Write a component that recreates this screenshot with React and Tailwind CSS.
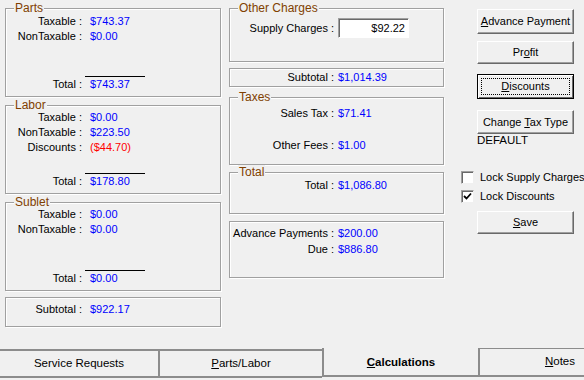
import React from 'react'

const font = { fontFamily: '"Liberation Sans", Arial, sans-serif' }

const Group = ({ title, className = '', children }) => (
  <div className={`relative border border-[#a0a0a0] shadow-[inset_1px_1px_0_#fff,1px_1px_0_#fff] ${className}`}>
    {title && (
      <span className="absolute -top-[8px] left-[8px] px-[1px] bg-[#f0f0f0] text-[#804000] leading-[14px] text-[12px] whitespace-nowrap">
        {title}
      </span>
    )}
    {children}
  </div>
)

const Row = ({ label, value, color = 'text-[#0000ff]', w = 'w-[76px]', gap = 'pl-[8px]' }) => (
  <div className="flex h-[15px] leading-[15px] whitespace-nowrap">
    <div className={`${w} text-right shrink-0`}>{label}</div>
    <div className={`${gap} ${color}`}>{value}</div>
  </div>
)

const TotalRow = ({ value }) => (
  <div className="mt-auto pb-[4px]">
    <div className="ml-[79px] w-[60px] border-t border-black" />
    <Row label="Total :" value={value} />
  </div>
)

const MidRow = ({ label, value }) => (
  <Row label={label} value={value} w="w-[104px]" gap="pl-[4px]" />
)

const Btn = ({ children, h = 'h-[25px]', focused = false, className = '' }) => (
  <button
    className={`relative w-[97px] shrink-0 ${h} bg-[#f0f0f0] text-black text-[11px] leading-none whitespace-nowrap ${
      focused
        ? 'border border-black shadow-[inset_1px_1px_0_#fff,inset_-1px_-1px_0_#696969]'
        : 'border border-t-white border-l-white border-r-[#696969] border-b-[#696969] shadow-[inset_-1px_-1px_0_#a0a0a0]'
    } ${className}`}
  >
    {focused && <span className="absolute inset-[3px] border border-dotted border-black" />}
    <span className="relative">{children}</span>
  </button>
)

const Check = ({ checked, label }) => (
  <div className="flex items-center h-[13px] whitespace-nowrap">
    <div className="w-[13px] h-[13px] shrink-0 bg-white border border-t-[#a0a0a0] border-l-[#a0a0a0] border-r-[#f0f0f0] border-b-[#f0f0f0] shadow-[inset_1px_1px_0_#696969] flex items-center justify-center">
      {checked && (
        <svg width="9" height="9" viewBox="0 0 9 9">
          <path d="M1 4 L3.5 6.5 L8 1.5" stroke="#000" strokeWidth="1.8" fill="none" />
        </svg>
      )}
    </div>
    <span className="ml-[6px] text-[11px] leading-[13px]">{label}</span>
  </div>
)

const App = () => {
  return (
    <div className="w-[584px] h-[380px] bg-[#f0f0f0] text-black text-[11px] flex flex-col overflow-hidden select-none" style={font}>
      <div className="flex flex-1 pt-[8px]">
        {/* left column */}
        <div className="ml-[5px] w-[216px] shrink-0 flex flex-col">
          <Group title="Parts" className="h-[89px] flex flex-col pt-[5px]">
            <Row label="Taxable :" value="$743.37" />
            <Row label="NonTaxable :" value="$0.00" />
            <TotalRow value="$743.37" />
          </Group>
          <Group title="Labor" className="mt-[8px] h-[89px] flex flex-col pt-[4px]">
            <Row label="Taxable :" value="$0.00" />
            <Row label="NonTaxable :" value="$223.50" />
            <Row label="Discounts :" value="($44.70)" color="text-[#ff0000]" />
            <TotalRow value="$178.80" />
          </Group>
          <Group title="Sublet" className="mt-[8px] h-[89px] flex flex-col pt-[4px]">
            <Row label="Taxable :" value="$0.00" />
            <Row label="NonTaxable :" value="$0.00" />
            <TotalRow value="$0.00" />
          </Group>
          <Group className="mt-[6px] h-[30px] pt-[4px]">
            <Row label="Subtotal :" value="$922.17" />
          </Group>
        </div>

        {/* middle column */}
        <div className="ml-[8px] w-[215px] shrink-0 flex flex-col">
          <Group title="Other Charges" className="h-[54px] pt-[9px]">
            <div className="flex items-center h-[20px] whitespace-nowrap">
              <div className="w-[104px] text-right">Supply Charges :</div>
              <div className="ml-[4px] w-[71px] h-[20px] bg-white border border-t-[#a0a0a0] border-l-[#a0a0a0] border-r-[#fff] border-b-[#fff] shadow-[inset_1px_1px_0_#696969] text-right pr-[3px] leading-[18px]">
                $92.22
              </div>
            </div>
          </Group>
          <Group className="mt-[6px] h-[19px] flex items-center">
            <MidRow label="Subtotal :" value="$1,014.39" />
          </Group>
          <Group title="Taxes" className="mt-[10px] h-[68px] pt-[8px]">
            <MidRow label="Sales Tax :" value="$71.41" />
            <div className="mt-[17px]">
              <MidRow label="Other Fees :" value="$1.00" />
            </div>
          </Group>
          <Group title="Total" className="mt-[7px] h-[42px] pt-[5px]">
            <MidRow label="Total :" value="$1,086.80" />
          </Group>
          <Group className="mt-[7px] h-[57px] pt-[4px] flex flex-col gap-[1px]">
            <MidRow label="Advance Payments :" value="$200.00" />
            <MidRow label="Due :" value="$886.80" />
          </Group>
        </div>

        {/* right column */}
        <div className="ml-[17px] w-[123px] shrink-0 flex flex-col pt-[1px]">
          <div className="ml-[16px] flex flex-col">
            <Btn><span className="underline">A</span>dvance Payment</Btn>
            <Btn h="h-[23px]" className="mt-[7px]">Pr<span className="underline">o</span>fit</Btn>
            <Btn focused className="mt-[10px]"><span className="underline">D</span>iscounts</Btn>
            <Btn h="h-[24px]" className="mt-[11px]">Change <span className="underline">T</span>ax Type</Btn>
            <div className="h-[13px] leading-[13px] text-[11.5px]">DEFAULT</div>
          </div>
          <div className="mt-[24px] flex flex-col gap-[6px]">
            <Check label="Lock Supply Charges" />
            <Check checked label="Lock Discounts" />
          </div>
          <div className="ml-[16px] mt-[8px]">
            <Btn h="h-[23px]"><span className="underline">S</span>ave</Btn>
          </div>
        </div>
      </div>

      {/* tabs */}
      <div className="flex h-[32px] shrink-0 items-start text-[11.5px] overflow-hidden">
        <div className="w-[158px] shrink-0 h-[29px] mt-[1px] border-t-2 border-b-2 border-[#8c8c8c] flex items-center justify-center">
          Service Requests
        </div>
        <div className="w-[164px] shrink-0 h-[29px] mt-[1px] border-t-2 border-b-2 border-l-2 border-[#8c8c8c] flex items-center justify-center">
          <span><span className="underline">P</span>arts/Labor</span>
        </div>
        <div className="w-[158px] shrink-0 h-[29px] pt-[2px] border-l-2 border-r-2 border-b-2 border-[#8c8c8c] flex items-center justify-center font-bold">
          <span><span className="underline">C</span>alculations</span>
        </div>
        <div className="w-[160px] shrink-0 h-[30px] -mt-[1px] border-t-2 border-b-2 border-[#8c8c8c] flex items-center justify-center">
          <span><span className="underline">N</span>otes</span>
        </div>
      </div>
    </div>
  )
}

export default App
